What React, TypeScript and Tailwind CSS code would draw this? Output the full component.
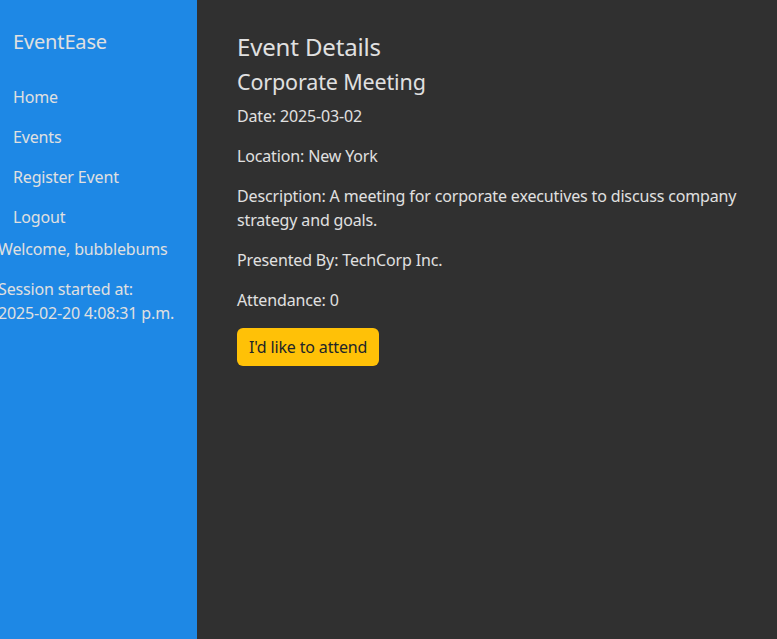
const navLinks = ["Home", "Events", "Register Event", "Logout"];

const details = [
  { label: "Date", value: "2025-03-02" },
  { label: "Location", value: "New York" },
  {
    label: "Description",
    value: "A meeting for corporate executives to discuss company strategy and goals.",
  },
  { label: "Presented By", value: "TechCorp Inc." },
  { label: "Attendance", value: "0" },
];

export default function App() {
  return (
    <div className="flex min-h-[639px] font-['Noto_Sans',sans-serif] tracking-[-0.15px] text-[#e0e0e0]">
      <aside className="w-[197px] shrink-0 overflow-hidden bg-[#1e88e5]">
        <div className="px-[13px] pt-[28px] text-[20px] leading-[28px]">EventEase</div>
        <nav className="mt-[21px]">
          <ul>
            {navLinks.map((link) => (
              <li key={link} className="px-[13px] py-[8px] text-[16px] leading-[24px]">
                {link}
              </li>
            ))}
          </ul>
        </nav>
        <div className="-ml-[2px] text-[16px] leading-[24px]">
          <p className="mb-[16px]">Welcome, bubblebums</p>
          <p>
            Session started at:
            <br />
            2025-02-20 4:08:31 p.m.
          </p>
        </div>
      </aside>

      <main className="flex-1 bg-[#303030] px-[40px] pt-[30px]">
        <h2 className="text-[24px] leading-[34px]">Event Details</h2>
        <h3 className="mt-[2px] mb-[6px] text-[21.5px] leading-[32px]">Corporate Meeting</h3>
        {details.map((item) => (
          <p key={item.label} className="mb-[16px] text-[16px] leading-[24px]">
            {item.label}: {item.value}
          </p>
        ))}
        <button className="rounded-[6px] bg-[#ffc107] px-[12px] py-[7px] text-[16px] leading-[24px] text-[#212529]">
          I'd like to attend
        </button>
      </main>
    </div>
  );
}
